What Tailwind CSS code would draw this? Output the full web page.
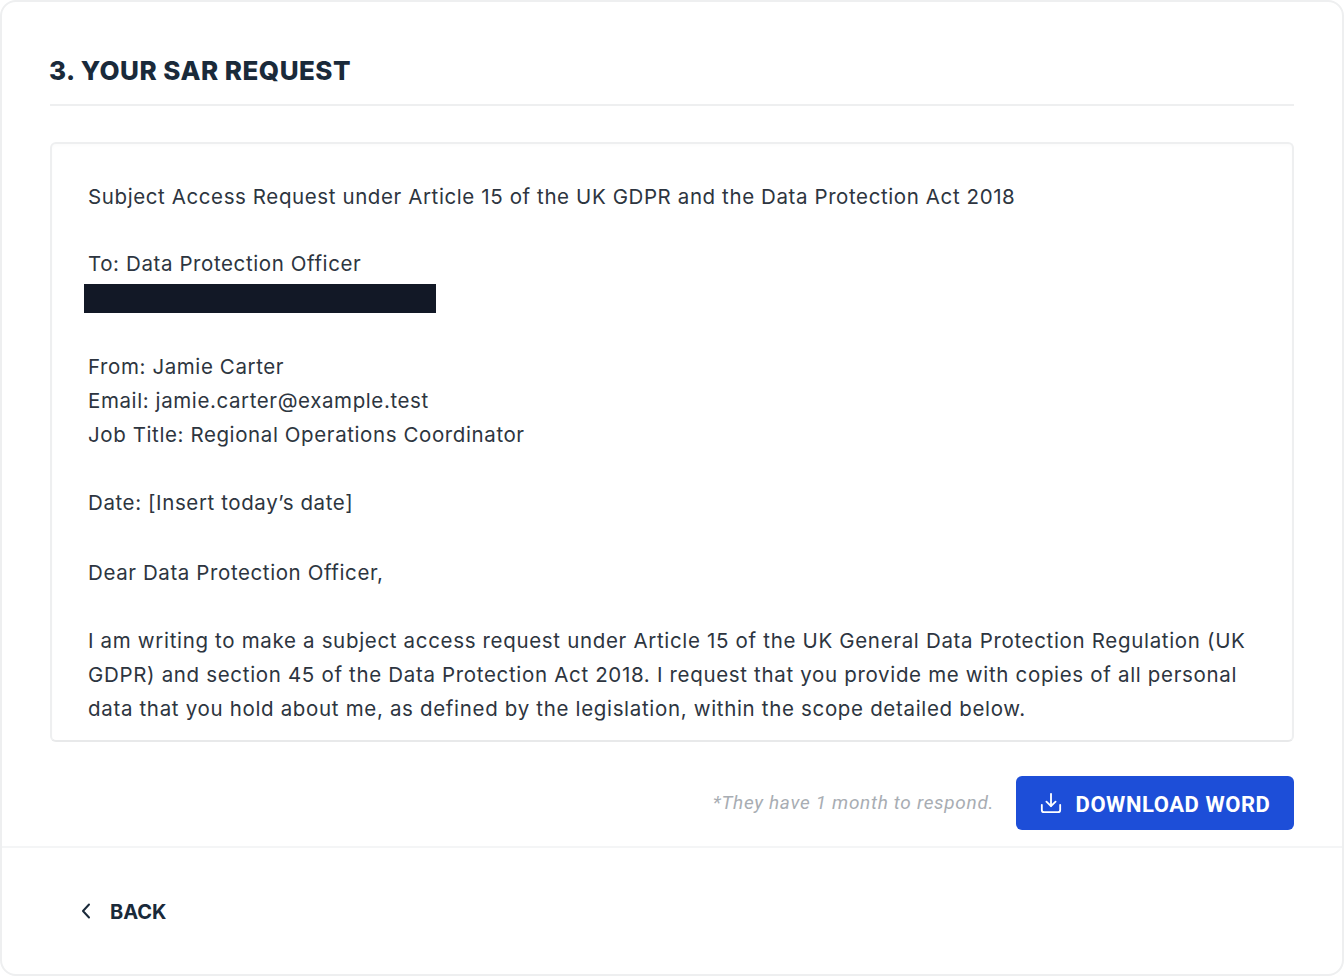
<!doctype html>
<html><head><meta charset="utf-8"><script src="https://cdn.jsdelivr.net/npm/@tailwindcss/browser@4"></script></head>
<body class="bg-white font-['Inter',sans-serif]">
<div class="h-[976px] w-[1344px] rounded-[16px] border-2 border-[#eeeff0] bg-white flex flex-col">
  <div class="px-[48px] flex-1 flex flex-col">
    <div class="h-[104px] pt-[50px] border-b-2 border-[#eeeff0]">
      <h1 class="text-[26px] leading-[38px] font-extrabold text-[#1a2a3a] tracking-[0.48px] -ml-[1px]">3. YOUR SAR REQUEST</h1>
    </div>
    <div class="mt-[36px] h-[600px] overflow-hidden rounded-[6px] border-2 border-[#eeeff0] border-b-[#e8e9ea] px-[36px] pt-[36px] text-[20.5px] leading-[34.25px] text-[#2d3540] tracking-[0.6px] shadow-[inset_0_2px_3px_rgba(0,0,0,0.015)]">
      <p>Subject Access Request under Article 15 of the UK GDPR and the Data Protection Act 2018</p>
      <p class="h-[33px]"></p>
      <p>To: Data Protection Officer</p>
      <div class="-ml-[4px] w-[352px] h-[29px] mt-[2px] mb-[3px] bg-[#121826]"></div>
      <p class="h-[34px]"></p>
      <p>From: Jamie Carter</p>
      <p>Email: jamie.carter@example.test</p>
      <p>Job Title: Regional Operations Coordinator</p>
      <p class="h-[34px]"></p>
      <p>Date: [Insert today’s date]</p>
      <p class="h-[35px]"></p>
      <p>Dear Data Protection Officer,</p>
      <p class="h-[34px]"></p>
      <p class="tracking-[0.67px]">I am writing to make a subject access request under Article 15 of the UK General Data Protection Regulation (UK GDPR) and section 45 of the Data Protection Act 2018. I request that you provide me with copies of all personal data that you hold about me, as defined by the legislation, within the scope detailed below.</p>
    </div>
    <div class="mt-[34px] flex items-center justify-end gap-[22px]">
      <span class="pt-[1px] text-[19px] italic text-[#a8adb3] font-['Roboto',sans-serif] tracking-[0.68px]">*They have 1 month to respond.</span>
      <button class="h-[54px] w-[278px] rounded-[6px] bg-[#1d4ed8] flex items-center justify-center gap-[14px] text-white text-[22px] font-bold font-['Roboto',sans-serif] tracking-[0.55px]">
        <svg class="w-[22px] h-[22px] -mt-[1px]" viewBox="0 0 24 24" fill="none" stroke="currentColor" stroke-width="2" stroke-linecap="round" stroke-linejoin="round"><path d="M12 2v13"/><path d="M7 10.500l5 5 5-5"/><path d="M2 14v5.500A2.500 2.500 0 0 0 4.500 22h15a2.500 2.500 0 0 0 2.500-2.500V14"/></svg>
        <span class="pt-[3px]">DOWNLOAD WORD</span>
      </button>
    </div>
  </div>
  <div class="h-[128px] border-t-2 border-[#f4f5f6] flex items-center pl-[76px] gap-[16px] text-[#1a2a3a] text-[20px] font-bold">
    <svg class="w-[16px] h-[18px]" viewBox="0 0 16 18" fill="none" stroke="currentColor" stroke-width="2" stroke-linecap="round" stroke-linejoin="round"><path d="M11 2.500L5 9l6 6.500"/></svg>
    <span class="pt-[2px]">BACK</span>
  </div>
</div>
</body></html>
